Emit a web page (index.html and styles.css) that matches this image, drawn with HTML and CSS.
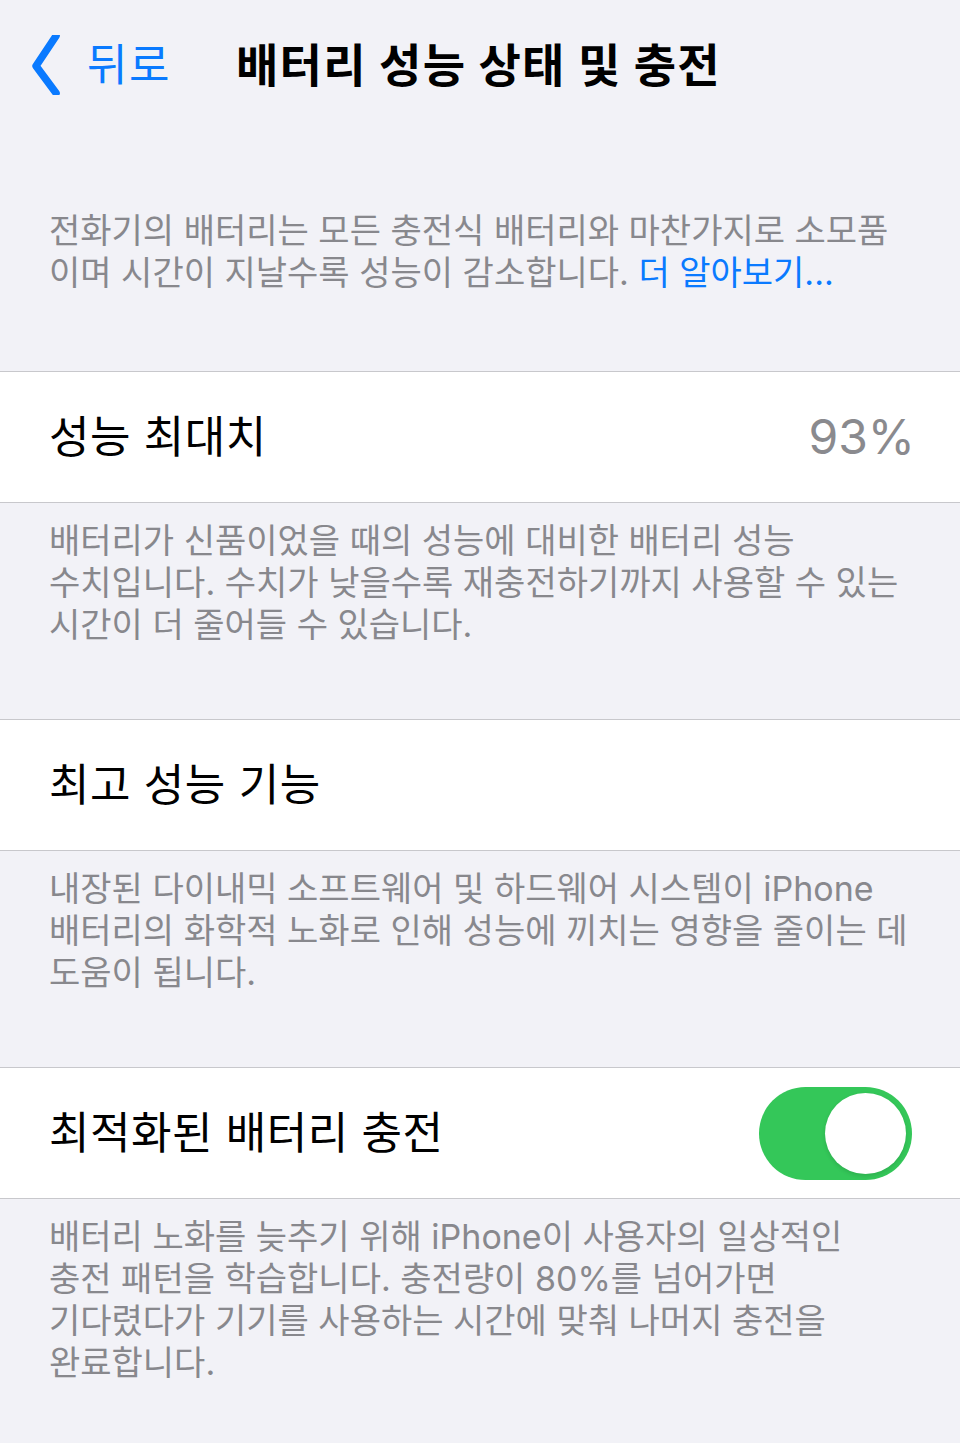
FILE: index.html
```html
<!DOCTYPE html>
<html lang="ko">
<head>
<meta charset="utf-8">
<title>배터리 성능 상태 및 충전</title>
<link rel="stylesheet" href="styles.css">
</head>
<body>
<header class="nav">
  <a class="back">
    <svg class="chevron" width="40" height="60" viewBox="0 0 40 60" aria-hidden="true">
      <path d="M31 5 L11 35 L31 62" transform="translate(-3,-4)" fill="none" stroke="#0a7aff" stroke-width="7.5" stroke-linecap="round" stroke-linejoin="round"/>
    </svg>
    <span class="back-label">뒤로</span>
  </a>
  <h1 class="title">배터리 성능 상태 및 충전</h1>
</header>

<p class="footnote intro">전화기의 배터리는 모든 충전식 배터리와 마찬가지로 소모품<br>이며 시간이 지날수록 성능이 감소합니다. <span class="link">더 알아보기...</span></p>

<div class="cell">
  <span class="label">성능 최대치</span>
  <span class="value">93%</span>
</div>
<p class="footnote">배터리가 신품이었을 때의 성능에 대비한 배터리 성능<br>수치입니다. 수치가 낮을수록 재충전하기까지 사용할 수 있는<br>시간이 더 줄어들 수 있습니다.</p>

<div class="cell">
  <span class="label">최고 성능 기능</span>
</div>
<p class="footnote">내장된 다이내믹 소프트웨어 및 하드웨어 시스템이 iPhone<br>배터리의 화학적 노화로 인해 성능에 끼치는 영향을 줄이는 데<br>도움이 됩니다.</p>

<div class="cell">
  <span class="label">최적화된 배터리 충전</span>
  <span class="switch on"><span class="knob"></span></span>
</div>
<p class="footnote">배터리 노화를 늦추기 위해 iPhone이 사용자의 일상적인<br>충전 패턴을 학습합니다. 충전량이 80%를 넘어가면<br>기다렸다가 기기를 사용하는 시간에 맞춰 나머지 충전을<br>완료합니다.</p>
</body>
</html>
```

FILE: styles.css
```css
html, body {
  margin: 0;
  padding: 0;
  background: #f2f2f7;
}

body {
  font-family: "Inter", "Noto Sans CJK KR", sans-serif;
  color: #000;
  min-height: 1443px;
}

.nav {
  height: 130px;
  display: flex;
  align-items: center;
  padding-left: 28px;
}

.back {
  display: flex;
  align-items: center;
  color: #0a7aff;
  width: 208px;
}

.chevron {
  display: block;
  margin-right: 19px;
}

.back-label {
  font-size: 44px;
  letter-spacing: 1.5px;
  line-height: 1;
}

.title {
  margin: 0;
  font-size: 46px;
  font-weight: 700;
  letter-spacing: 1.3px;
  line-height: 1;
}

.footnote {
  margin: 0;
  padding: 17px 30px 73px 49px;
  font-size: 34px;
  line-height: 42px;
  letter-spacing: 0;
  color: #88888d;
  white-space: nowrap;
}

.footnote.intro {
  padding-top: 80px;
  padding-bottom: 77px;
}

.link {
  color: #0a7aff;
}

.cell {
  height: 130px;
  background: #fff;
  border-top: 1px solid #c8c8cc;
  border-bottom: 1px solid #c8c8cc;
  display: flex;
  align-items: center;
  justify-content: space-between;
  padding: 0 48px 0 49px;
}

.label {
  font-size: 44px;
  letter-spacing: 0.5px;
  line-height: 1;
}

.value {
  font-size: 48px;
  color: #8a8a8e;
  line-height: 1;
  margin-right: -3px;
}

.switch {
  width: 153px;
  height: 93px;
  border-radius: 47px;
  background: #34c759;
  display: flex;
  align-items: center;
  justify-content: flex-end;
  padding: 6px;
  box-sizing: border-box;
}

.knob {
  width: 81px;
  height: 81px;
  border-radius: 50%;
  background: #fff;
  box-shadow: 0 2px 4px rgba(0,0,0,0.12);
}
```
